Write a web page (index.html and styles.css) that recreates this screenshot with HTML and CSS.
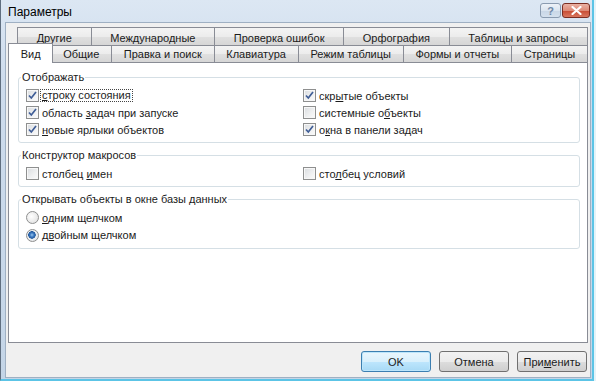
FILE: index.html
```html
<!DOCTYPE html>
<html lang="ru">
<head>
    <meta charset="UTF-8">
    <meta name="viewport" content="width=device-width, initial-scale=1.0">
    <title>Параметры</title>
    <link rel="stylesheet" href="styles.css">
</head>
<body>
    <div class="window">
        <div class="titlebar">
            <span class="title">Параметры</span>
            <div class="caption-buttons">
                <span class="caption-btn help">?</span>
                <span class="caption-btn close">
                    <svg width="11" height="9" viewBox="0 0 11 9"><path d="M1.5 1 L9.5 8 M9.5 1 L1.5 8" stroke="#fff" stroke-width="2.2" stroke-linecap="round"/></svg>
                </span>
            </div>
        </div>

        <div class="client">
            <div class="tab-row back">
                <div class="tab">Другие</div>
                <div class="tab">Международные</div>
                <div class="tab">Проверка ошибок</div>
                <div class="tab">Орфография</div>
                <div class="tab">Таблицы и запросы</div>
            </div>
            <div class="tab-row front">
                <div class="tab selected">Вид</div>
                <div class="tab">Общие</div>
                <div class="tab">Правка и поиск</div>
                <div class="tab">Клавиатура</div>
                <div class="tab">Режим таблицы</div>
                <div class="tab">Формы и отчеты</div>
                <div class="tab">Страницы</div>
            </div>

            <div class="panel">
                <fieldset class="group">
                    <legend>Отображать</legend>
                    <div class="options">
                        <label class="option"><span class="check on"><svg width="11" height="11" viewBox="0 0 11 11"><path d="M2 5.5 L4.3 8 L9 2" fill="none" stroke="#3f5d96" stroke-width="1.7"/></svg></span><span class="label focus"><u>с</u>троку состояния</span></label>
                        <label class="option"><span class="check on"><svg width="11" height="11" viewBox="0 0 11 11"><path d="M2 5.5 L4.3 8 L9 2" fill="none" stroke="#3f5d96" stroke-width="1.7"/></svg></span><span class="label">скр<u>ы</u>тые объекты</span></label>
                        <label class="option"><span class="check on"><svg width="11" height="11" viewBox="0 0 11 11"><path d="M2 5.5 L4.3 8 L9 2" fill="none" stroke="#3f5d96" stroke-width="1.7"/></svg></span><span class="label">область <u>з</u>адач при запуске</span></label>
                        <label class="option"><span class="check"></span><span class="label">системные о<u>б</u>ъекты</span></label>
                        <label class="option"><span class="check on"><svg width="11" height="11" viewBox="0 0 11 11"><path d="M2 5.5 L4.3 8 L9 2" fill="none" stroke="#3f5d96" stroke-width="1.7"/></svg></span><span class="label"><u>н</u>овые ярлыки объектов</span></label>
                        <label class="option"><span class="check on"><svg width="11" height="11" viewBox="0 0 11 11"><path d="M2 5.5 L4.3 8 L9 2" fill="none" stroke="#3f5d96" stroke-width="1.7"/></svg></span><span class="label">о<u>к</u>на в панели задач</span></label>
                    </div>
                </fieldset>

                <fieldset class="group">
                    <legend>Конструктор макросов</legend>
                    <div class="options">
                        <label class="option"><span class="check"></span><span class="label">столбец <u>и</u>мен</span></label>
                        <label class="option"><span class="check"></span><span class="label">сто<u>л</u>бец условий</span></label>
                    </div>
                </fieldset>

                <fieldset class="group">
                    <legend>Открывать объекты в окне базы данных</legend>
                    <div class="options single">
                        <label class="option"><span class="radio"></span><span class="label"><u>о</u>дним щелчком</span></label>
                        <label class="option"><span class="radio on"></span><span class="label">д<u>в</u>ойным щелчком</span></label>
                    </div>
                </fieldset>
            </div>

            <div class="footer">
                <button class="btn default">OK</button>
                <button class="btn">Отмена</button>
                <button class="btn">При<u>м</u>енить</button>
            </div>
        </div>
    </div>
</body>
</html>
```

FILE: styles.css
```css
html, body {
    margin: 0;
    padding: 0;
}
body {
    width: 596px;
    height: 381px;
    overflow: hidden;
    background: #e4f3f9;
    font-family: "Liberation Sans", Arial, sans-serif;
    font-size: 11px;
    color: #1b1b1b;
}
.window {
    width: 594px;
    height: 381px;
    box-sizing: border-box;
    display: flex;
    flex-direction: column;
    padding: 0 1px 1px 4px;
    background: linear-gradient(to bottom, #dce7f3 0, #cedced 80px, #c4d5e7 100%);
    border-left: 1px solid #606f80;
    border-right: 2px solid #5cc4e6;
    border-bottom: 2px solid #5cc4e6;
}

/* title bar */
.titlebar {
    height: 22px;
    flex: none;
    display: flex;
    justify-content: space-between;
}
.title {
    padding: 2px 0 0 3px;
    line-height: 20px;
    font-size: 12px;
    color: #000;
}
.caption-buttons {
    display: flex;
    gap: 1px;
    padding-top: 3px;
    margin-right: 1px;
}
.caption-btn {
    height: 15px;
    box-sizing: border-box;
    border-radius: 3px;
    display: flex;
    align-items: center;
    justify-content: center;
}
.help {
    width: 21px;
    border: 1px solid #8a9bb0;
    background: linear-gradient(to bottom, #edf2f8 0, #dbe5f0 50%, #c8d6e6 51%, #d5e1ee 100%);
    color: #7089a8;
    font-weight: bold;
    font-size: 11px;
}
.close {
    width: 28px;
    border: 1px solid #7a2d22;
    background: linear-gradient(to bottom, #eab1a3 0, #dd8b78 50%, #c74a32 51%, #d9775f 100%);
}

/* client area */
.client {
    flex: 1;
    display: flex;
    flex-direction: column;
    padding: 4px 2px 0 2px;
    background: #f0f0f0;
    border: 1px solid #9fb0c3;
}
.tab-row {
    display: flex;
    flex: none;
}
.tab-row.back {
    height: 18px;
    margin-left: 9px;
}
.tab-row.front {
    height: 17px;
    margin-left: 2px;
}
.tab {
    flex: 1 1 auto;
    margin-left: -1px;
    padding: 0 6px;
    border: 1px solid #898c95;
    border-bottom: none;
    background: linear-gradient(to bottom, #f4f4f4 0, #ececec 50%, #e0e0e0 51%, #d6d6d6 100%);
    text-align: center;
    line-height: 14px;
    white-space: nowrap;
}
.tab:first-child {
    margin-left: 0;
}
.back .tab {
    padding-top: 3px;
}
.front .tab {
    padding-top: 1px;
}
.front .tab.selected {
    position: relative;
    z-index: 1;
    margin: -2px -2px -1px -2px;
    padding-top: 3px;
    background: #fff;
}

.panel {
    flex: 1;
    padding: 8px 7px 0 9px;
    background: #fff;
    border: 1px solid #898c95;
}
.group {
    margin: 0 0 6px;
    padding: 3px 7px 4px;
    border: 1px solid #d5dfe5;
    border-radius: 3px;
}
.group legend {
    margin-left: -5px;
    padding: 0 1px;
    line-height: 13px;
}
.options {
    display: grid;
    grid-template-columns: 277px 1fr;
}
.options.single {
    grid-template-columns: 1fr;
}
.option {
    height: 17px;
    display: flex;
    align-items: center;
    white-space: nowrap;
}
.single .option {
    height: 17.5px;
}
.check,
.radio {
    width: 13px;
    height: 13px;
    box-sizing: border-box;
    flex: none;
    margin-right: 3px;
    border: 1px solid #8e8f8f;
}
.check {
    background: linear-gradient(135deg, #d9dcdf 0, #f0f1f2 60%, #fbfbfb 100%);
    box-shadow: inset 0 0 0 1px #f7f7f7;
}
.check svg {
    display: block;
}
.radio {
    border-radius: 50%;
    background: radial-gradient(circle at 40% 40%, #ffffff 0, #e6e6e6 70%, #d2d2d2 100%);
}
.radio.on {
    background: radial-gradient(circle at 45% 45%, #9cc9f0 0, #3b78c0 2px, #245a9e 3.5px, #eef1f4 4px, #dadada 100%);
}
.label {
    white-space: pre;
}
.focus {
    margin-left: -2px;
    padding: 0 1px;
    border: 1px dotted #444;
    line-height: 11px;
}
u {
    text-decoration: underline;
}

/* dialog buttons */
.footer {
    flex: none;
    display: flex;
    justify-content: flex-end;
    gap: 8px;
    padding: 8px 1px 5px 0;
}
.btn {
    width: 70px;
    height: 21px;
    padding: 0;
    border: 1px solid #707070;
    border-radius: 3px;
    background: linear-gradient(to bottom, #f2f2f2 0, #ebebeb 50%, #dddddd 51%, #cfcfcf 100%);
    font-family: "Liberation Sans", Arial, sans-serif;
    font-size: 11px;
    color: #1b1b1b;
}
.btn.default {
    border-color: #3c7fb1;
    box-shadow: inset 0 0 0 1px #bde6fb;
    background: linear-gradient(to bottom, #eaf6fd 0, #d9f0fc 50%, #bee6fd 51%, #a7d9f5 100%);
}
```
